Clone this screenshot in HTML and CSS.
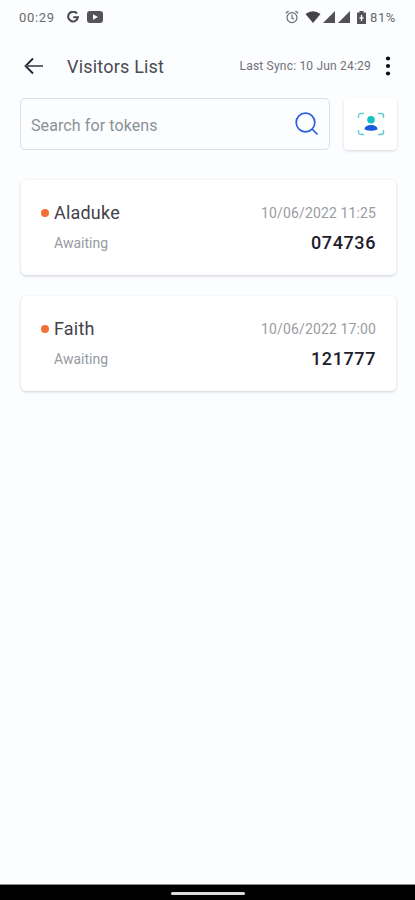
FILE: index.html
```html
<!DOCTYPE html>
<html lang="en">
<head>
	<meta charset="UTF-8">
	<meta name="viewport" content="width=device-width, initial-scale=1">
	<title>Visitors List</title>
	<link rel="stylesheet" href="styles.css">
</head>

<body>

<div id="wrapper">
	<div class="status">
		<span class="time">00:29</span>
		<svg class="google" width="12" height="12" viewBox="0 0 12 12"><path d="M9.900 2.500A4.900 4.900 0 1 0 10.900 6.300H6.200" fill="none" stroke="#4b4b4d" stroke-width="2.100"/></svg>
		<svg class="video" width="16" height="12" viewBox="0 0 16 12"><rect width="16" height="12" rx="3" fill="#555557"/><path d="M6 3.200v5.600L11 6z" fill="#fbfdff"/></svg>
		<div class="status_right">
			<svg class="alarm" width="14" height="14" viewBox="0 0 14 14" fill="none" stroke="#6a6a6c" stroke-width="1.200"><circle cx="7" cy="7.600" r="5"/><path d="M7 4.600v3.300l2 1.300M.8 3.300L3.600 1M13.200 3.300L10.400 1"/></svg>
			<svg class="wifi" width="16" height="12" viewBox="0 0 16 12"><path d="M.5 3Q8-2.400 15.500 3L8 12z" fill="#444446"/></svg>
			<svg class="signal" width="12" height="12" viewBox="0 0 12 12"><path d="M12 0v12H0z" fill="#505052"/></svg>
			<svg class="signal" width="12" height="12" viewBox="0 0 12 12"><path d="M12 0v12H0z" fill="#505052"/></svg>
			<svg class="battery" width="9" height="13" viewBox="0 0 9 13"><path d="M2.500 0h4v1.500H9V13H0V1.500h2.500z" fill="#555557"/><path d="M4.500 4v6M2.500 7h4" stroke="#fbfdff" stroke-width="1.300"/></svg>
			<span class="percent">81%</span>
		</div>
	</div>

	<div class="header">
		<svg class="back" width="20" height="18" viewBox="0 0 20 18" fill="none" stroke="#222230" stroke-width="1.800"><path d="M9 1.500L1.500 9 9 16.500"/><path d="M1.500 9H19" stroke="#55555f"/></svg>
		<h1>Visitors List</h1>
		<span class="sync">Last Sync: 10 Jun 24:29</span>
		<svg class="more" width="6" height="20" viewBox="0 0 6 20" fill="#0c0c14"><circle cx="3" cy="2.500" r="2.100"/><circle cx="3" cy="10" r="2.100"/><circle cx="3" cy="17.500" r="2.100"/></svg>
	</div>

	<div class="search">
		<div class="search_box">
			<span>Search for tokens</span>
			<svg width="24" height="24" viewBox="0 0 24 24" fill="none" stroke="#2a5fdd" stroke-width="1.700"><circle cx="10.500" cy="10.500" r="9.300"/><path d="M17 17l5.500 5.500"/></svg>
		</div>
		<div class="scan">
			<svg width="28" height="24" viewBox="0 0 28 24"><path d="M1.500 6V4q0-2.500 2.500-2.500h3M21 1.500h3q2.500 0 2.500 2.500v2M26.500 18v2q0 2.500-2.500 2.500h-3M7 22.500H4q-2.500 0-2.500-2.500v-2" fill="none" stroke="#62cccd" stroke-width="1.400"/><circle cx="14" cy="7.700" r="3.800" fill="#18bfc2"/><path d="M7.500 17.500c0-2.800 2.800-4.500 6.500-4.500s6.500 1.700 6.500 4.500q-6.500 2.600-13 0z" fill="#1b5bdc"/></svg>
		</div>
	</div>

	<ul class="list">
		<li class="card">
			<i class="dot"></i>
			<div class="visitor">
				<div class="name">Aladuke</div>
				<div class="state">Awaiting</div>
			</div>
			<div class="info">
				<div class="date">10/06/2022 11:25</div>
				<div class="token">074736</div>
			</div>
		</li>
		<li class="card">
			<i class="dot"></i>
			<div class="visitor">
				<div class="name">Faith</div>
				<div class="state">Awaiting</div>
			</div>
			<div class="info">
				<div class="date">10/06/2022 17:00</div>
				<div class="token">121777</div>
			</div>
		</li>
	</ul>

	<div class="navbar">
		<div class="handle"></div>
	</div>
</div>

</body>
</html>
```
FILE: styles.css
```css
*{
	margin: 0;
	padding: 0;
	box-sizing: border-box;
}
li{
	list-style: none;
}
svg{
	display: block;
	flex: none;
}
body{
	background: #fbfdff;
	font-family: Roboto, "Liberation Sans", sans-serif;
}
#wrapper{
	height: 900px;
	display: flex;
	flex-direction: column;
	white-space: nowrap;
}

/* status bar */
.status{
	height: 34px;
	padding: 0 19px 0 19px;
	display: flex;
	align-items: center;
	font-size: 13px;
	color: #6a6a6c;
}
.time{
	width: 48px;
	letter-spacing: 0.7px;
}
.video{
	margin-left: 8px;
}
.status_right{
	margin-left: auto;
	display: flex;
	align-items: center;
}
.wifi{
	margin-left: 6px;
}
.signal{
	margin-left: 2px;
}
.signal + .signal{
	margin-left: 3px;
}
.battery{
	margin: 0 4px 0 7px;
}
.percent{
	letter-spacing: 0.6px;
}

/* title row */
.header{
	height: 64px;
	padding: 0 24px;
	display: flex;
	align-items: center;
}
.header h1{
	margin-left: 23px;
	font-size: 18px;
	font-weight: 400;
	letter-spacing: 0.2px;
	color: #4a4a52;
}
.sync{
	margin-left: auto;
	font-size: 12px;
	letter-spacing: 0.2px;
	color: #707076;
}
.more{
	margin-left: 14px;
}

/* search */
.search{
	height: 52px;
	padding: 0 18px 0 20px;
	display: flex;
	justify-content: space-between;
}
.search_box{
	width: 310px;
	padding: 0 10px;
	display: flex;
	align-items: center;
	justify-content: space-between;
	border: 1px solid #dcdee2;
	border-radius: 5px;
	font-size: 16px;
	letter-spacing: 0.1px;
	color: #8c9096;
}
.search_box span{
	padding-top: 2px;
}
.scan{
	width: 53px;
	display: flex;
	align-items: center;
	justify-content: center;
	background: #fff;
	border-radius: 4px;
	box-shadow: 0 1px 3px rgba(30,35,50,0.16);
}

/* visitors */
.list{
	flex: 1;
	padding: 30px 19px 0 21px;
}
.card{
	height: 95px;
	margin-bottom: 21px;
	padding: 22px 20px 0;
	display: flex;
	background: #fff;
	border-radius: 5px;
	box-shadow: 0 1px 3px rgba(30,35,50,0.2);
}
.dot{
	width: 8px;
	height: 8px;
	margin: 7px 5px 0 0;
	border-radius: 50%;
	background: #f37037;
}
.name, .date{
	height: 22px;
	line-height: 22px;
}
.name{
	font-size: 18px;
	letter-spacing: 0.2px;
	color: #42424a;
}
.state, .token{
	margin-top: 8px;
	height: 22px;
	line-height: 22px;
}
.state{
	font-size: 14px;
	color: #969aa2;
}
.info{
	margin-left: auto;
	text-align: right;
}
.date{
	font-size: 14px;
	letter-spacing: 0.13px;
	color: #9a9ca1;
}
.token{
	font-size: 18px;
	font-weight: 500;
	letter-spacing: 0.6px;
	color: #1c1c2a;
}

/* bottom bar */
.navbar{
	height: 16px;
	padding-top: 1px;
	display: flex;
	align-items: center;
	justify-content: center;
	background: #000;
	border-top: 1px solid #8a8c8e;
}
.handle{
	width: 74px;
	height: 3px;
	border-radius: 2px;
	background: #dcdcdc;
}
```
